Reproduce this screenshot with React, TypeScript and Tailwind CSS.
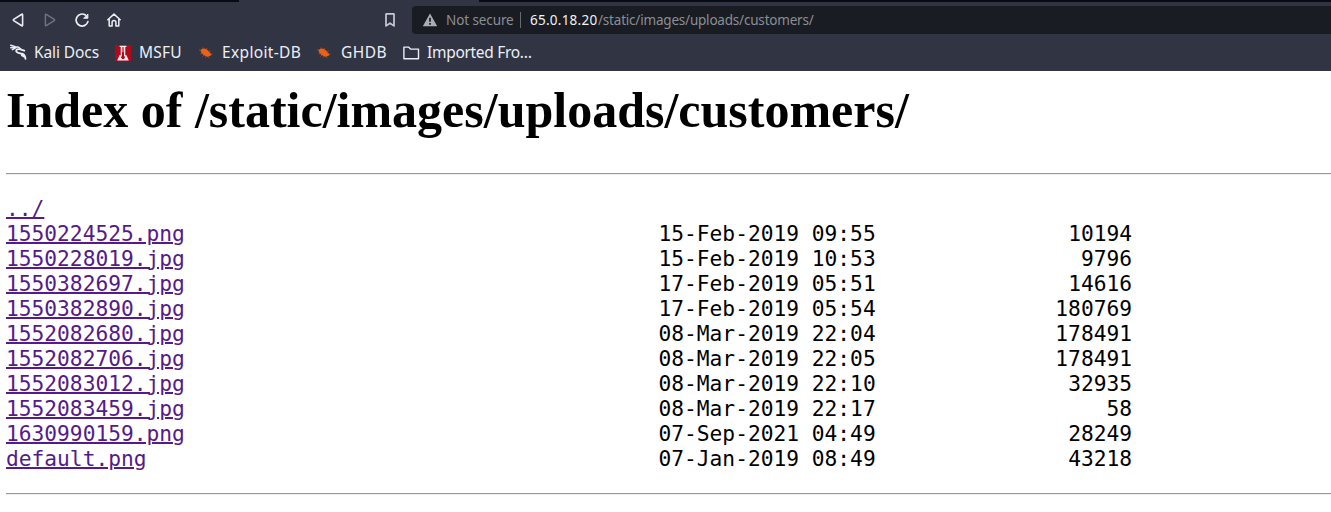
import React from "react";

const files: [string, string, string][] = [
  ["1550224525.png", "15-Feb-2019 09:55", "10194"],
  ["1550228019.jpg", "15-Feb-2019 10:53", "9796"],
  ["1550382697.jpg", "17-Feb-2019 05:51", "14616"],
  ["1550382890.jpg", "17-Feb-2019 05:54", "180769"],
  ["1552082680.jpg", "08-Mar-2019 22:04", "178491"],
  ["1552082706.jpg", "08-Mar-2019 22:05", "178491"],
  ["1552083012.jpg", "08-Mar-2019 22:10", "32935"],
  ["1552083459.jpg", "08-Mar-2019 22:17", "58"],
  ["1630990159.png", "07-Sep-2021 04:49", "28249"],
  ["default.png", "07-Jan-2019 08:49", "43218"],
];

const stroke = { fill: "none", stroke: "currentColor", strokeLinejoin: "round", strokeLinecap: "round" } as const;

function Back() {
  return (
    <svg className="h-4 w-4" viewBox="0 0 16 16" {...stroke} strokeWidth="1.6">
      <path d="M12.6 2.7v10.6q0 .9-.8.4L3.7 8.6q-.7-.6 0-1.2l8.1-5.1q.8-.5.8.4z" />
    </svg>
  );
}

function Forward() {
  return (
    <svg className="h-4 w-4" viewBox="0 0 16 16" {...stroke} strokeWidth="1.4">
      <path d="M3.4 2.7v10.6q0 .9.8.4l8.1-5.1q.7-.6 0-1.2L4.2 2.3q-.8-.5-.8.4z" />
    </svg>
  );
}

function Reload() {
  return (
    <svg className="h-4 w-4" viewBox="0 0 16 16" {...stroke} strokeWidth="1.7">
      <path d="M13.9 9.6A6 6 0 1 1 11.4 3" />
      <path d="M13.9 2.4v3.9H10z" fill="currentColor" strokeWidth=".9" />
    </svg>
  );
}

function Home() {
  return (
    <svg className="h-4 w-4" viewBox="0 0 16 16" {...stroke} strokeWidth="1.5">
      <path d="M1.8 7.8L8 2.1l6.2 5.7M3.2 7v6.9h2.9v-3.5q0-1.8 1.9-1.8t1.9 1.8v3.5h2.9V7" />
    </svg>
  );
}

function Dragon() {
  return (
    <svg className="h-[17px] w-[17px]" viewBox="0 0 17 17" {...stroke} strokeWidth="1.5">
      <path d="M.7 1.2l4.7 1.6 3.3.4 2.2 2M.8 3.7l4.6-.5M2.4 5.6l3.5-2" />
      <path strokeWidth="1.8" d="M10.8 5.4Q5.8 4.6 6.2 7.2c.4 2.4 4 1.8 6.6 2.7 1.9.7 2.4 2.4 2.7 5M10.3 5.3l4 1.3M11.6 9.8q-.3 1.8 2.6 2.8" />
    </svg>
  );
}

function Metasploit() {
  return (
    <svg className="h-4 w-4" viewBox="0 0 16 16">
      <path fill="#b1081b" d="M0 0h16v16H0z" />
      <path fill="#f8e9eb" d="M4.6.8h6.8v1.2h-1.1v8.2h1.2l2.3 5.2H2.2l2.3-5.2h1.2V2H4.6z" />
      <path fill="#b1081b" d="M7 2.2h2v8.8l.9.8v1l-1.1 1.1H7.2l-1.1-1.1v-1l.9-.8z" />
      <path fill="#f8e9eb" d="M7.6 2.2h.8v5h-.8z" />
    </svg>
  );
}

function Bug() {
  return (
    <svg className="h-4 w-4" viewBox="0 0 16 16">
      <path fill="#ed6212" d="M2.4 5.2L4.6 3.6l2.8.1 2.4 1.6 1.6 1.9 2.2 2-.9 1.6-1.6.2-1 .9-2.6-.8-2.6-1.5-1.7-2z" />
      <path fill="none" stroke="#a84b20" strokeWidth=".9" d="M.8 5h2M4.8 2.4l.6 1.6M8.6 3l.2 1.8M2.4 8.6h2M4.6 11.6l1.2-1.4M11 6.2l1.8-.2M12.8 9.4l1.8-.2M10.6 11.4l.6 1.6M8 11l-.4 1.6" />
    </svg>
  );
}

function Folder() {
  return (
    <svg className="h-4 w-[17px]" viewBox="0 0 17 16" {...stroke} strokeWidth="1.4">
      <path d="M.9 2.1h4.6l2 2h8v9.7H.9z" />
    </svg>
  );
}

export default function App() {
  return (
    <div className="h-[512px] w-full overflow-hidden bg-white text-black">
      <header className="flex h-[71px] flex-col bg-[#313543] font-['Noto_Sans',sans-serif] text-[#eceef5]">
        <div className="flex h-[2px] shrink-0">
          <div className="w-[239px] bg-[#090b14]" />
          <div className="w-[240px]" />
          <div className="flex-1 bg-[#090b14]" />
        </div>
        <div className="flex h-9 shrink-0 items-center pl-[10px]">
          <div className="flex gap-4">
            <Back />
            <span className="text-[#707482]"><Forward /></span>
            <Reload />
            <Home />
          </div>
          <svg className="ml-[260px] h-4 w-4 text-[#c8cad3]" viewBox="0 0 16 16" {...stroke} strokeWidth="1.7">
            <path d="M4.5 1.8h7q.5 0 .5.5v11.6L8 11.2l-4 2.7V2.3q0-.5.5-.5z" />
          </svg>
          <div className="ml-[14px] flex h-7 flex-1 items-center rounded-l-[4px] bg-[#191c23] pl-[10px] text-[13.5px] whitespace-pre text-[#8b8e94]">
            <svg className="h-4 w-4 shrink-0" viewBox="0 0 16 16">
              <path fill="#a9adb5" d="M8 1.5l7.2 12.7H.8z" />
              <path stroke="#191c23" strokeWidth="1.7" d="M8 5.7v4M8 11v1.8" />
            </svg>
            <span className="ml-[8px] w-[67px] tracking-[-0.1px]">Not secure</span>
            <span className="ml-[7px] h-4 w-px bg-[#676a72]" />
            <span className="ml-[9px] w-[68px] tracking-[0.25px] text-[#f1f2f4]">65.0.18.20</span>
            <span className="tracking-[-0.2px]">/static/images/uploads/customers/</span>
          </div>
        </div>
        <nav className="flex h-[29px] shrink-0 items-center pl-[10px] text-[15.5px] whitespace-nowrap">
          <Dragon />
          <span className="ml-[7px] w-[81px] pt-px tracking-[-0.1px]">Kali Docs</span>
          <Metasploit />
          <span className="ml-[8px] w-[59px] pt-px tracking-[0.2px]">MSFU</span>
          <Bug />
          <span className="ml-[8px] w-[94px] pt-px tracking-[0.35px]">Exploit-DB</span>
          <Bug />
          <span className="ml-[9px] w-[62px] pt-px tracking-[0.5px]">GHDB</span>
          <Folder />
          <span className="ml-[7px] pt-px tracking-[-0.3px]">Imported Fro…</span>
        </nav>
      </header>
      <main className="pl-[6px]">
        <h1 className="h-[102px] pt-[11px] font-['Liberation_Serif',serif] text-[50px] leading-[57px] font-bold whitespace-nowrap">
          Index of /static/images/uploads/customers/
        </h1>
        <hr className="h-[2px] border-t border-b border-t-[#9a9a9a] border-b-[#eeeeee]" />
        <div className="pt-[21px] pb-[22px] font-['DejaVu_Sans_Mono',monospace] text-[21.23px] leading-[25px] whitespace-pre">
          <div>
            <a className="text-[#551a8b] underline decoration-2">../</a>
          </div>
          {files.map(([name, date, size]) => (
            <div key={name} className="flex">
              <div className="w-[652.5px]">
                <a className="text-[#551a8b] underline decoration-2">{name}</a>
              </div>
              <span className="w-[217.5px]">{date}</span>
              <span className="w-[256px] text-right">{size}</span>
            </div>
          ))}
        </div>
        <hr className="h-[2px] border-t border-b border-t-[#9a9a9a] border-b-[#eeeeee]" />
      </main>
    </div>
  );
}
